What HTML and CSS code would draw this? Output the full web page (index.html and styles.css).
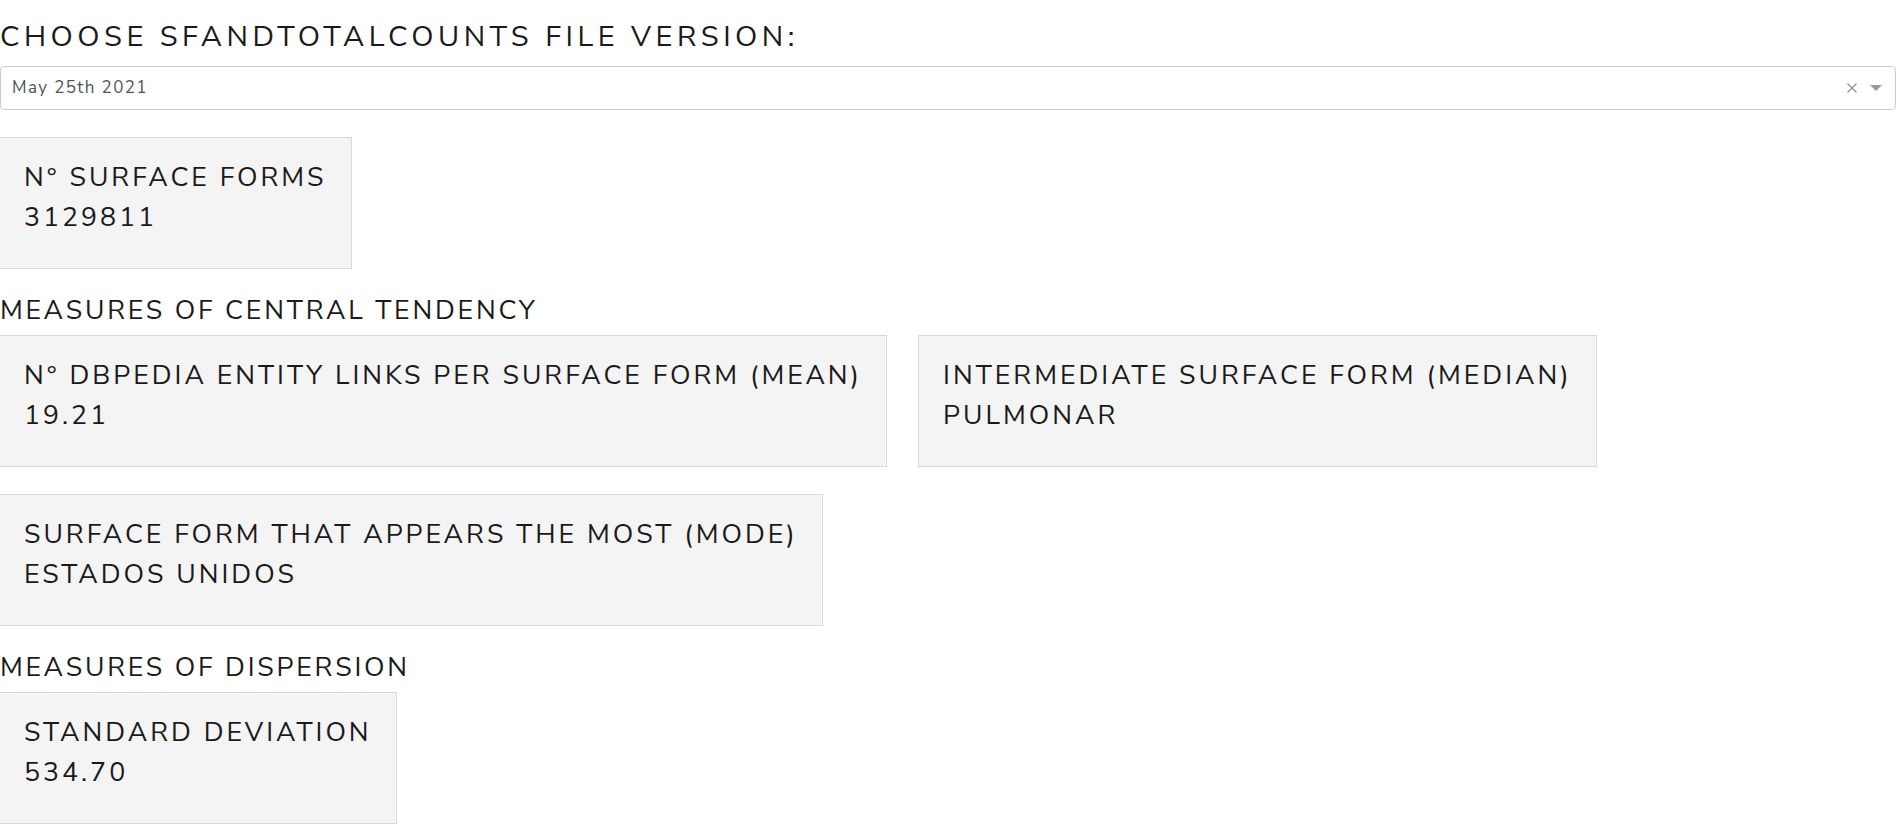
FILE: index.html
```html
<!DOCTYPE html>
<html lang="en">
<head>
<meta charset="utf-8">
<title>SFandTotalCounts</title>
<link rel="stylesheet" href="styles.css">
</head>
<body>
<main class="page">
  <h1 class="page-title">Choose SFandTotalCounts file version:</h1>
  <div class="select">
    <span class="select-value">May 25th 2021</span>
    <span class="select-controls">
      <svg class="select-clear" width="10" height="10" viewBox="0 0 10 10" aria-hidden="true"><path d="M0.5 0.5 L9.5 9.5 M9.5 0.5 L0.5 9.5" stroke="#8a8f96" stroke-width="1.2" fill="none"/></svg>
      <svg class="select-arrow" width="12" height="6" viewBox="0 0 12 6" aria-hidden="true"><path d="M0 0 H12 L6 6 Z" fill="#999"/></svg>
    </span>
  </div>

  <div class="card-row first-row">
    <div class="card">
      <div class="card-label">N° surface forms</div>
      <div class="card-value">3129811</div>
    </div>
  </div>

  <h2 class="section-title">Measures of central tendency</h2>
  <div class="card-row">
    <div class="card">
      <div class="card-label">N° DBpedia entity links per surface form (mean)</div>
      <div class="card-value">19.21</div>
    </div>
    <div class="card">
      <div class="card-label">Intermediate surface form (median)</div>
      <div class="card-value">pulmonar</div>
    </div>
    <div class="card">
      <div class="card-label">Surface form that appears the most (mode)</div>
      <div class="card-value">Estados Unidos</div>
    </div>
  </div>

  <h2 class="section-title">Measures of dispersion</h2>
  <div class="card-row">
    <div class="card">
      <div class="card-label">Standard deviation</div>
      <div class="card-value">534.70</div>
    </div>
  </div>
</main>
</body>
</html>
```
FILE: styles.css
```css
html, body {
  margin: 0;
  padding: 0;
  background: #ffffff;
}

body {
  font-family: "Nunito Sans", Lato, "Open Sans", sans-serif;
  color: #1a1a1a;
}

.page {
  display: flex;
  flex-direction: column;
  align-items: stretch;
}

.page-title {
  margin: 20px 0 11px 0;
  font-size: 29px;
  line-height: 1.2;
  font-weight: 400;
  letter-spacing: 4.5px;
  text-transform: uppercase;
  color: #1a1a1a;
}

.select {
  display: flex;
  align-items: center;
  justify-content: space-between;
  height: 44px;
  box-sizing: border-box;
  margin-right: 2px;
  padding: 0 13px 0 11px;
  border: 1px solid #cccccc;
  border-radius: 4px;
  background: #ffffff;
}

.select-value {
  font-size: 17px;
  letter-spacing: 1.4px;
  color: #4f5459;
}

.select-controls {
  display: flex;
  align-items: center;
  gap: 13px;
}

.select-clear {
  display: block;
}

.select-arrow {
  display: block;
}

.card-row {
  display: flex;
  flex-wrap: wrap;
  align-items: flex-start;
  column-gap: 31px;
  row-gap: 27px;
  margin-left: -1px;
}

.first-row {
  margin-top: 27px;
}

.card {
  box-sizing: border-box;
  padding: 19px 24px 31px 24px;
  background: #f4f4f4;
  border: 1px solid #d9d9d9;
  font-size: 26.7px;
  line-height: 40px;
  letter-spacing: 3px;
  text-transform: uppercase;
  color: #1a1a1a;
}

.card-label,
.card-value {
  white-space: nowrap;
}

.section-title {
  margin: 21px 0 5px 0;
  font-size: 26.7px;
  line-height: 40px;
  font-weight: 400;
  letter-spacing: 2.8px;
  text-transform: uppercase;
  color: #1a1a1a;
}
```
